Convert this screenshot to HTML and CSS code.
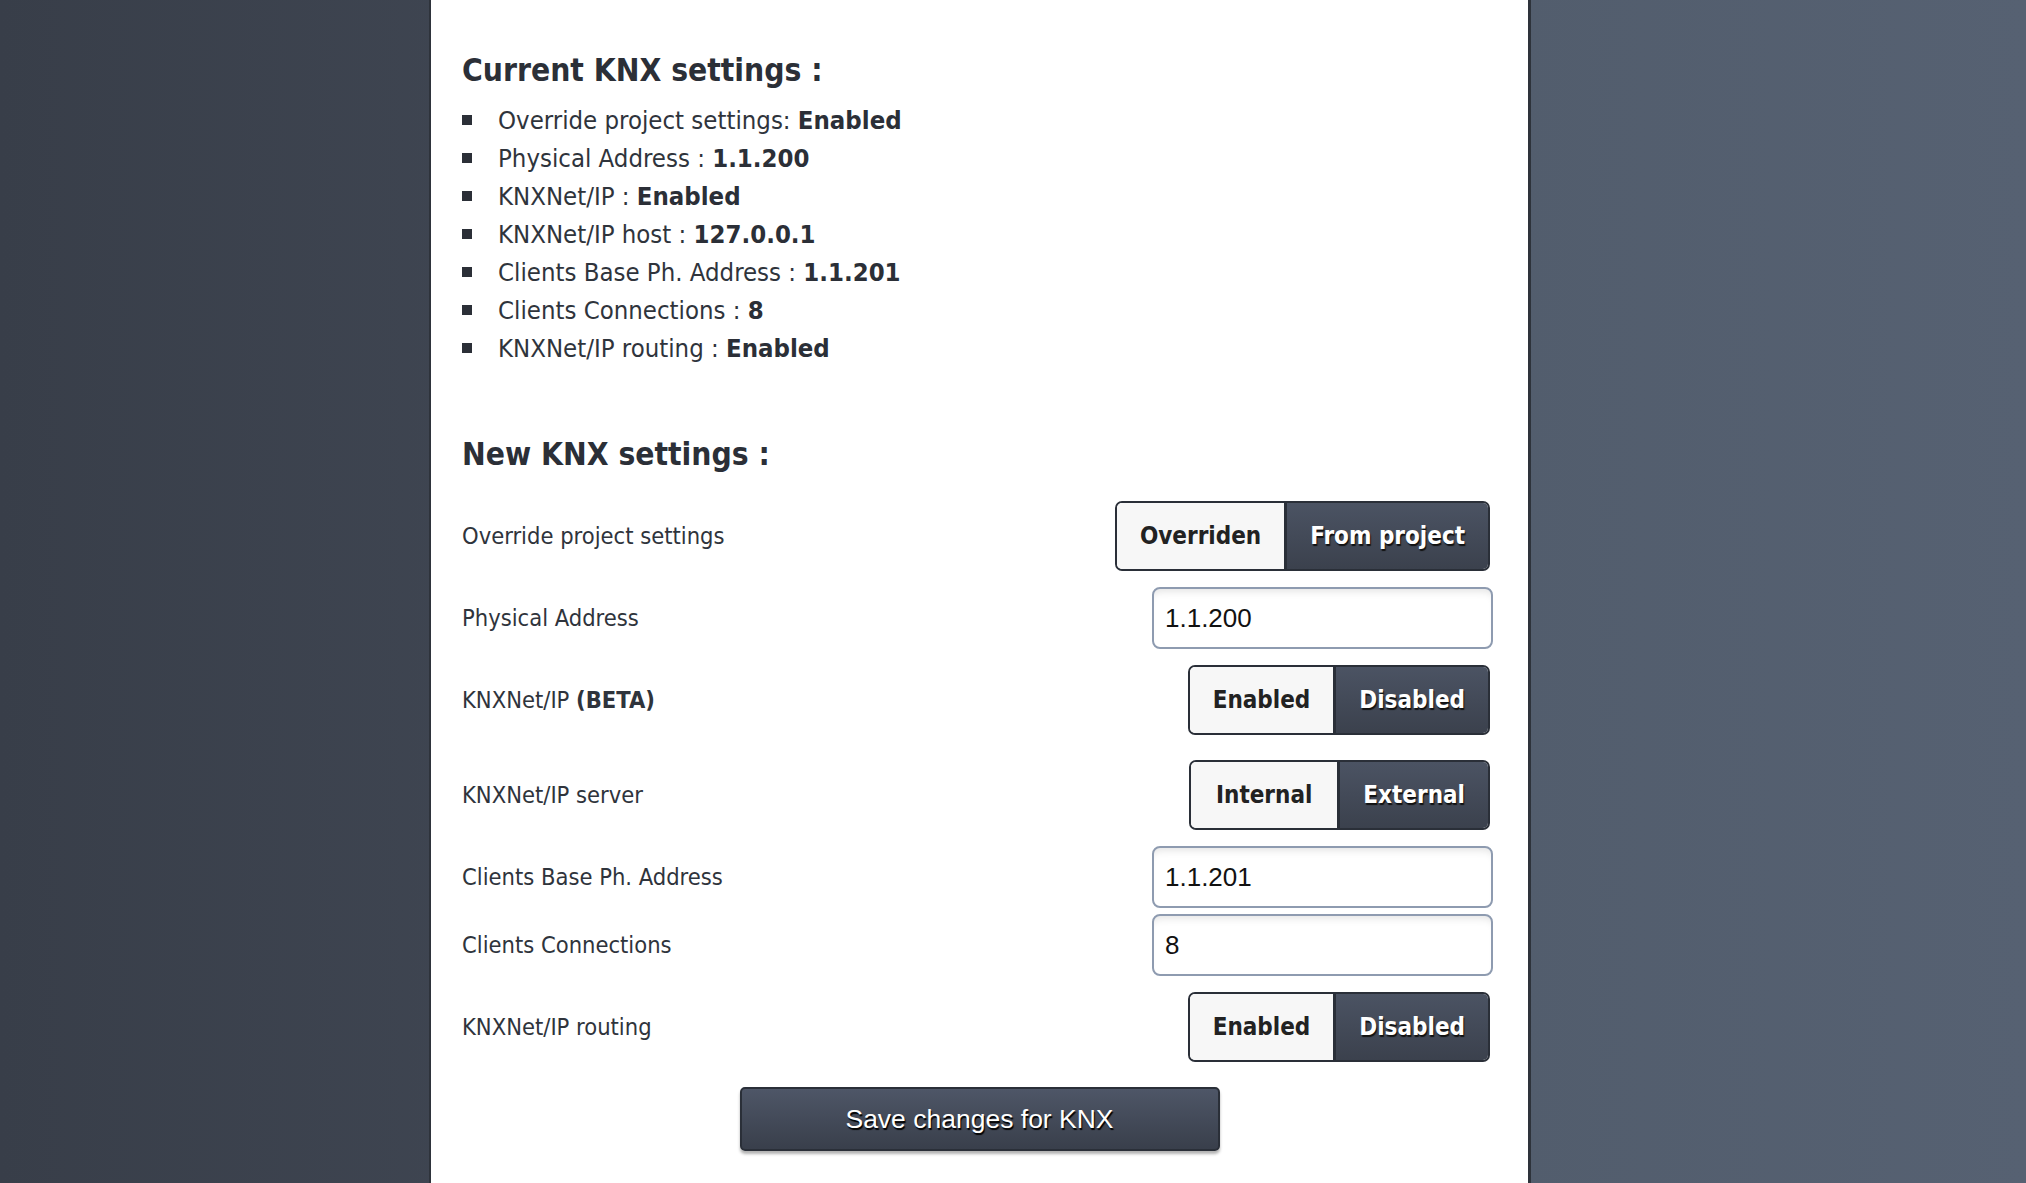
FILE: index.html
```html
<!DOCTYPE HTML>
<html lang="en">

<head>
    <title>KNX settings</title>
    <meta charset="utf-8">
    <meta name="viewport" content="width=device-width, initial-scale=1">
    <link rel="stylesheet" href="styles.css">
</head>

<body>
    <div id="main">
        <h3>Current KNX settings :</h3>
        <ul class="current">
            <li>Override project settings: <b>Enabled</b></li>
            <li>Physical Address : <b>1.1.200</b></li>
            <li>KNXNet/IP : <b>Enabled</b></li>
            <li>KNXNet/IP host : <b>127.0.0.1</b></li>
            <li>Clients Base Ph. Address : <b>1.1.201</b></li>
            <li>Clients Connections : <b>8</b></li>
            <li>KNXNet/IP routing : <b>Enabled</b></li>
        </ul>

        <h3 class="new">New KNX settings :</h3>
        <form class="settings" onsubmit="return false;">
            <div class="row">
                <label>Override project settings</label>
                <div class="toggle">
                    <button type="button">Overriden</button>
                    <button type="button" class="active">From project</button>
                </div>
            </div>
            <div class="row">
                <label for="phys">Physical Address</label>
                <input type="text" id="phys" value="1.1.200">
            </div>
            <div class="row">
                <label>KNXNet/IP <b>(BETA)</b></label>
                <div class="toggle">
                    <button type="button">Enabled</button>
                    <button type="button" class="active">Disabled</button>
                </div>
            </div>
            <div class="row spaced">
                <label>KNXNet/IP server</label>
                <div class="toggle">
                    <button type="button" class="wide">Internal</button>
                    <button type="button" class="active">External</button>
                </div>
            </div>
            <div class="row">
                <label for="base">Clients Base Ph. Address</label>
                <input type="text" id="base" value="1.1.201">
            </div>
            <div class="row tight">
                <label for="conn">Clients Connections</label>
                <input type="text" id="conn" value="8">
            </div>
            <div class="row">
                <label>KNXNet/IP routing</label>
                <div class="toggle">
                    <button type="button">Enabled</button>
                    <button type="button" class="active">Disabled</button>
                </div>
            </div>
            <div class="actions">
                <button type="submit" class="save">Save changes for KNX</button>
            </div>
        </form>
    </div>
</body>

</html>
```

FILE: styles.css
```css
body {
    margin: 0;
    min-height: 1183px;
    font-family: "DejaVu Sans Condensed", "Liberation Sans", sans-serif;
    color: #2f343c;
    background: linear-gradient(90deg, #383e49 0%, #434a57 40%, #525d6d 75%, #566172 100%);
}

#main {
    width: 1097px;
    min-height: 1183px;
    margin-left: 431px;
    padding: 50px 35px 0 31px;
    box-sizing: border-box;
    background: #fff;
    box-shadow: -2px 0 0 #2e333b, 3px 0 0 #2e333b;
}

h3 {
    margin: 0;
    font-size: 31.5px;
    line-height: 40px;
    font-weight: bold;
    color: #2b2f37;
}

h3.new {
    margin-top: 67px;
}

ul.current {
    list-style: none;
    margin: 11px 0 0;
    padding: 0;
    font-size: 25.5px;
    line-height: 38px;
}

ul.current li {
    display: flex;
    align-items: center;
    white-space: pre;
}

ul.current li::before {
    content: "";
    width: 10px;
    height: 10px;
    margin-right: 26px;
    background: #2b2f37;
}

ul.current b {
    color: #2b2f37;
}

.settings {
    margin-top: 27px;
}

.row {
    display: flex;
    justify-content: space-between;
    align-items: center;
    margin-top: 16px;
    font-size: 23.5px;
}

.row:first-child {
    margin-top: 0;
}

.row.spaced {
    margin-top: 25px;
}

.row.tight {
    margin-top: 6px;
}

.toggle {
    display: flex;
    height: 70px;
    margin-right: 3px;
    border: 2px solid #2a2f38;
    border-radius: 7px;
    overflow: hidden;
    box-sizing: border-box;
}

.toggle button {
    border: none;
    margin: 0;
    padding: 0 23px;
    font-family: "DejaVu Sans Condensed", "Liberation Sans", sans-serif;
    font-size: 24px;
    font-weight: bold;
    color: #222;
    background: #f7f7f7;
    cursor: pointer;
}

.toggle button.wide {
    padding: 0 25px;
}

.toggle button.active {
    color: #fff;
    border-left: 3px solid #2a2f38;
    background: linear-gradient(#4b5363, #3b414d);
    text-shadow: 1px 2px 1px #111;
}

.row input[type="text"] {
    width: 341px;
    height: 62px;
    padding: 0 11px;
    box-sizing: border-box;
    border: 2px solid #8e9bb0;
    border-radius: 8px;
    font-family: "Liberation Sans", Arial, sans-serif;
    font-size: 26px;
    color: #111;
    background: #fff;
    box-shadow: inset 0 8px 8px -6px rgba(0, 0, 0, 0.12);
}

.actions {
    display: flex;
    justify-content: center;
    margin-top: 25px;
    padding-left: 4px;
}

.save {
    width: 480px;
    height: 64px;
    border: 2px solid #2a2f38;
    border-radius: 5px;
    font-family: "Liberation Sans", Arial, sans-serif;
    font-size: 26.5px;
    color: #fff;
    background: linear-gradient(#4e5667, #393f4b);
    text-shadow: 1px 2px 1px #000;
    box-shadow: 0 3px 3px rgba(0, 0, 0, 0.3);
    cursor: pointer;
}
```
